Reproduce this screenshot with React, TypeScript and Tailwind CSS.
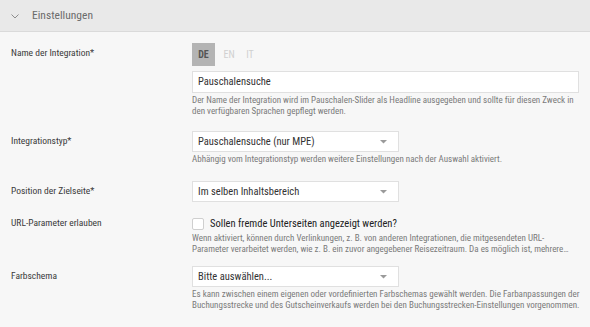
import React from "react";

const Arrow = () => (
  <svg width="7" height="4" viewBox="0 0 7 4" className="shrink-0">
    <path d="M0 0 L7 0 L3.5 3.5 Z" fill="#9a9a9a" />
  </svg>
);

const Select = ({ value }: { value: string }) => (
  <div className="w-[207px] h-[21px] bg-white border border-[#e0e0e0] flex items-center justify-between pl-[5px] pr-[11px] text-[10.5px] text-[#333] whitespace-nowrap">
    <span>{value}</span>
    <Arrow />
  </div>
);

const Help = ({ children }: { children: React.ReactNode }) => (
  <div className="mt-[2px] text-[9px] leading-[11px] text-[#7a7a7a] whitespace-nowrap">{children}</div>
);

export default function App() {
  return (
    <div
      className="w-[590px] h-[327px] bg-[#f7f7f7] overflow-hidden"
      style={{ fontFamily: "'Roboto Condensed', Lato, sans-serif" }}
    >
      <div className="h-[32px] bg-[#e9e9e9] border-b border-[#dadada] flex items-center pl-[11px]">
        <svg width="8" height="5" viewBox="0 0 8 5" className="mt-[1px]">
          <path d="M0.5 0.5 L4 4 L7.5 0.5" fill="none" stroke="#8c8c8c" strokeWidth="1" />
        </svg>
        <span className="ml-[13px] text-[11.5px] text-[#6b6b6b]">Einstellungen</span>
      </div>

      <div className="pl-[11px] pr-[12px] pt-[11px] grid grid-cols-[181px_1fr] text-[9.5px] text-[#3a3a3a] whitespace-nowrap">
        {/* Row 1 */}
        <div className="h-[20px] flex items-center">Name der Integration*</div>
        <div>
          <div className="flex items-center h-[23px] text-[10px] font-bold">
            <div className="w-[23px] h-[23px] bg-[#b4b4b4] text-[#555] flex items-center justify-center">DE</div>
            <div className="w-[28px] text-center text-[#d0d0d0] font-normal">EN</div>
            <div className="w-[14px] text-center text-[#d0d0d0] font-normal">IT</div>
          </div>
          <div className="mt-[5px] h-[22px] bg-white border border-[#e0e0e0] flex items-center pl-[5px] text-[10.5px] text-[#333]">
            Pauschalensuche
          </div>
          <Help>
            Der Name der Integration wird im Pauschalen-Slider als Headline ausgegeben und sollte für diesen Zweck in
            <br />
            den verfügbaren Sprachen gepflegt werden.
          </Help>
        </div>

        {/* Row 2 */}
        <div className="mt-[14px] h-[21px] flex items-center">Integrationstyp*</div>
        <div className="mt-[14px]">
          <Select value="Pauschalensuche (nur MPE)" />
          <Help>Abhängig vom Integrationstyp werden weitere Einstellungen nach der Auswahl aktiviert.</Help>
        </div>

        {/* Row 3 */}
        <div className="mt-[16px] h-[21px] flex items-center">Position der Zielseite*</div>
        <div className="mt-[16px]">
          <Select value="Im selben Inhaltsbereich" />
        </div>

        {/* Row 4 */}
        <div className="mt-[14px] h-[15px] flex items-center">URL-Parameter erlauben</div>
        <div className="mt-[14px]">
          <div className="h-[15px] flex items-center">
            <div className="w-[12px] h-[12px] bg-white border border-[#cfcfcf] rounded-[2px]" />
            <span className="ml-[6px] text-[10.5px] font-normal text-[#222]">Sollen fremde Unterseiten angezeigt werden?</span>
          </div>
          <Help>
            Wenn aktiviert, können durch Verlinkungen, z. B. von anderen Integrationen, die mitgesendeten URL-
            <br />
            Parameter verarbeitet werden, wie z. B. ein zuvor angegebener Reisezeitraum. Da es möglich ist, mehrere…
          </Help>
        </div>

        {/* Row 5 */}
        <div className="mt-[11px] h-[21px] flex items-center">Farbschema</div>
        <div className="mt-[11px]">
          <Select value="Bitte auswählen..." />
          <Help>
            Es kann zwischen einem eigenen oder vordefinierten Farbschemas gewählt werden. Die Farbanpassungen der
            <br />
            Buchungsstrecke und des Gutscheinverkaufs werden bei den Buchungsstrecken-Einstellungen vorgenommen.
          </Help>
        </div>
      </div>
    </div>
  );
}
